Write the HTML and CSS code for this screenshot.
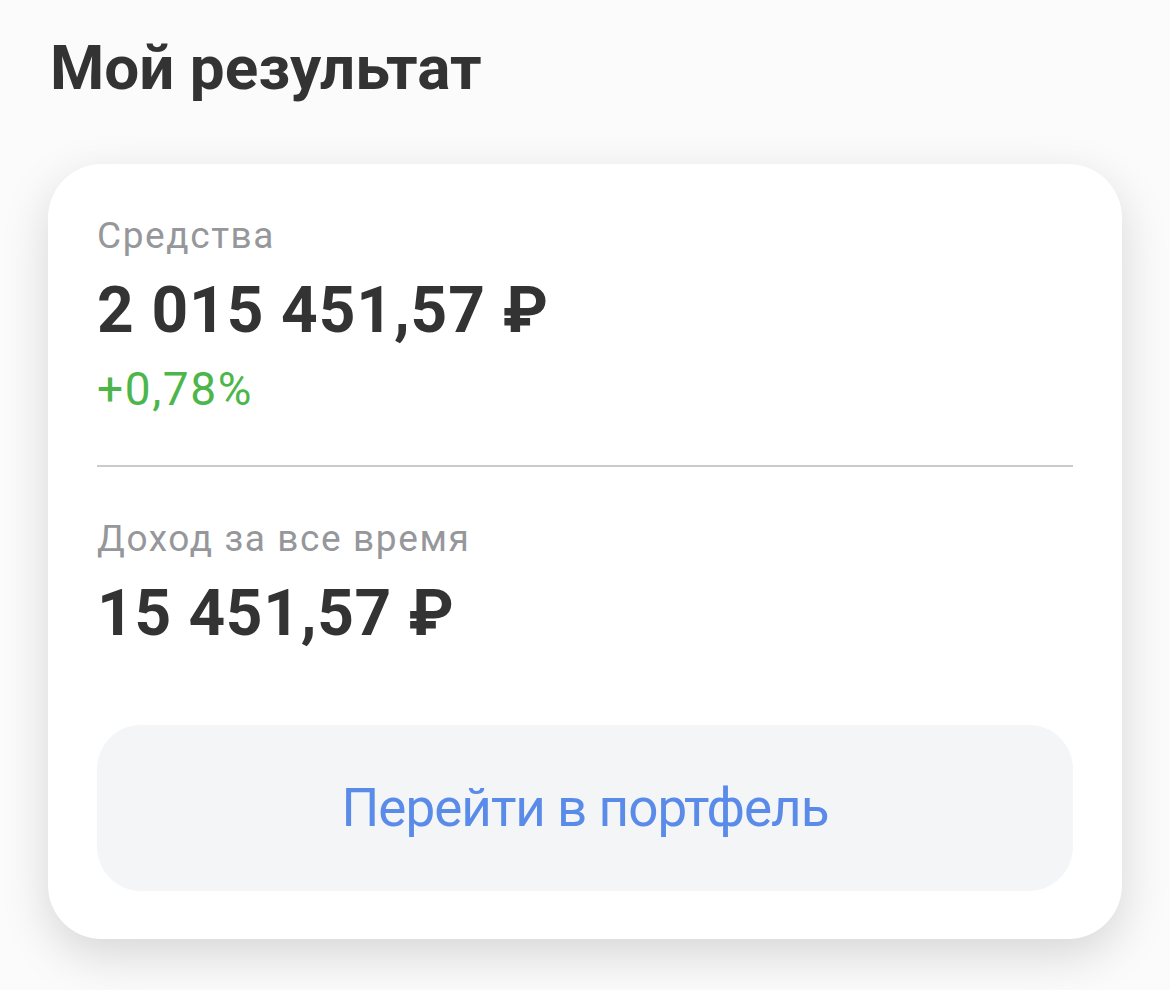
FILE: index.html
```html
<!DOCTYPE html>
<html lang="ru">
<head>
  <meta charset="UTF-8">
  <meta name="viewport" content="width=device-width, initial-scale=1.0">
  <title>Мой результат</title>
  <link rel="stylesheet" href="styles.css">
</head>
<body>
  <h1 class="page-title">Мой результат</h1>

  <div class="card">
    <div class="stat">
      <p class="stat-label">Средства</p>
      <p class="stat-value">2 015 451,57 ₽</p>
      <p class="stat-change">+0,78%</p>
    </div>

    <div class="divider"></div>

    <div class="stat">
      <p class="stat-label">Доход за все время</p>
      <p class="stat-value small">15 451,57 ₽</p>
    </div>

    <button type="button" class="portfolio-btn">Перейти в портфель</button>
  </div>
</body>
</html>
```

FILE: styles.css
```css
/* General Styles */
html {
  background: #fbfbfb;
}

body {
  font-family: Roboto, "Liberation Sans", sans-serif;
  margin: 0;
  padding: 0 48px 80px;
  color: #333;
}

p {
  margin: 0;
}

.page-title {
  margin: 32px 0 0 2px;
  font-size: 62px;
  line-height: 72px;
  font-weight: 700;
  color: #333;
}

.card {
  margin-top: 60px;
  padding: 50px 49px 48px;
  background: white;
  border-radius: 54px;
  box-shadow: 0 16px 48px rgba(0, 0, 0, 0.15);
}

.stat-label {
  font-size: 37px;
  line-height: 44px;
  letter-spacing: 1.6px;
  color: #96979b;
}

.stat-value {
  margin-top: 15px;
  font-size: 64px;
  line-height: 76px;
  font-weight: 700;
  letter-spacing: 0.9px;
  color: #333;
}

.stat-value.small {
  letter-spacing: 0.7px;
}

.stat-change {
  margin-top: 13px;
  font-size: 46px;
  line-height: 54px;
  letter-spacing: 1.6px;
  color: #4cb64a;
}

.divider {
  margin: 49px 0 50px;
  height: 2px;
  background: #cbcbcd;
}

.portfolio-btn {
  display: block;
  width: 100%;
  height: 166px;
  margin-top: 73px;
  border: none;
  border-radius: 44px;
  background: #f3f5f7;
  color: #5a8be8;
  font-family: inherit;
  font-size: 53px;
  letter-spacing: -1px;
  cursor: pointer;
}
```
